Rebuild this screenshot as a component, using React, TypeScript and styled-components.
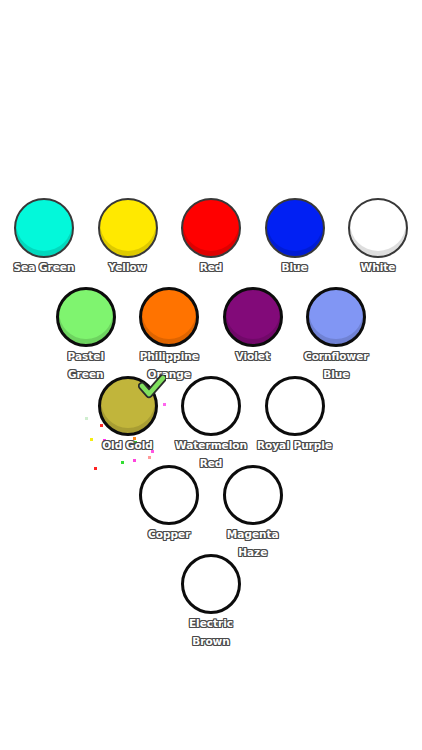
import React from 'react';
import styled, { createGlobalStyle } from 'styled-components';

const GlobalStyle = createGlobalStyle`
  html, body {
    margin: 0;
    padding: 0;
    background: #ffffff;
    font-family: "DejaVu Sans", "Liberation Sans", sans-serif;
  }
`;

const Page = styled.div`
  width: 422px;
  height: 750px;
  padding-top: 198px;
  box-sizing: border-box;
  overflow: hidden;
  background: #fff;
`;

const Pyramid = styled.div`
  display: flex;
  flex-direction: column;
  align-items: center;
`;

const Row = styled.div`
  display: flex;
  justify-content: center;
  height: 89px;
`;

const Cell = styled.div`
  position: relative;
  width: 83.5px;
  display: flex;
  flex-direction: column;
  align-items: center;
`;

const Swatch = styled.div<{ $color?: string; $thin?: boolean }>`
  width: 60px;
  height: 60px;
  border-radius: 50%;
  box-sizing: border-box;
  background: ${p => p.$color || '#fff'};
  border: ${p => (p.$thin ? '2px solid #383838' : '3px solid #0c0c0c')};
  box-shadow: ${p => (p.$color ? 'inset 0 -5px 0 rgba(0,0,0,0.13)' : 'none')};
  flex-shrink: 0;
`;

const Label = styled.div`
  margin-top: 0;
  width: 100px;
  text-align: center;
  font-size: 10.5px;
  font-weight: bold;
  line-height: 18px;
  color: #fff;
  white-space: nowrap;
  text-shadow:
    1px 0 0 #4a4a4a, -1px 0 0 #4a4a4a, 0 1px 0 #4a4a4a, 0 -1px 0 #4a4a4a,
    1px 1px 0 #4a4a4a, -1px -1px 0 #4a4a4a, 1px -1px 0 #4a4a4a, -1px 1px 0 #4a4a4a;
  position: relative;
  z-index: 2;
`;

const Check = styled.svg`
  position: absolute;
  left: 52px;
  top: -1px;
  width: 28px;
  height: 24px;
  z-index: 3;
`;

const Bit = styled.span<{ $c: string }>`
  position: absolute;
  width: 3px;
  height: 3px;
  background: ${p => p.$c};
  z-index: 1;
`;

type Color = { name: string[]; color?: string };

const rows: Color[][] = [
  [
    { name: ['Sea Green'], color: '#03f8da' },
    { name: ['Yellow'], color: '#ffe900' },
    { name: ['Red'], color: '#ff0000' },
    { name: ['Blue'], color: '#0120f3' },
    { name: ['White'], color: '#ffffff' },
  ],
  [
    { name: ['Pastel', 'Green'], color: '#7ff46f' },
    { name: ['Philippine', 'Orange'], color: '#ff7300' },
    { name: ['Violet'], color: '#820a79' },
    { name: ['Cornflower', 'Blue'], color: '#8196f4' },
  ],
  [
    { name: ['Old Gold'], color: '#c1b53b' },
    { name: ['Watermelon', 'Red'] },
    { name: ['Royal Purple'] },
  ],
  [{ name: ['Copper'] }, { name: ['Magenta', 'Haze'] }],
  [{ name: ['Electric', 'Brown'] }],
];

// confetti around the selected swatch, offsets from the cell's corner
const confetti = [
  { x: 14, y: 48, c: '#ff2a2a' },
  { x: 4, y: 62, c: '#f5ee10' },
  { x: 17, y: 63, c: '#ff33ee' },
  { x: 47, y: 61, c: '#ff8a1a' },
  { x: 48, y: 65, c: '#2ad02a' },
  { x: 65, y: 74, c: '#ff55e0' },
  { x: 47, y: 83, c: '#ff44dd' },
  { x: 35, y: 85, c: '#33dd33' },
  { x: 8, y: 91, c: '#ff2222' },
  { x: 77, y: 27, c: '#ff66ee' },
  { x: -1, y: 41, c: '#cfeecf' },
  { x: 62, y: 80, c: '#ff9999' },
];

const App: React.FC = () => {
  return (
    <>
      <GlobalStyle />
      <Page>
        <Pyramid>
          {rows.map((row, ri) => (
            <Row key={ri}>
              {row.map(item => (
                <Cell key={item.name.join(' ')}>
                  <Swatch $color={item.color} $thin={ri === 0} />
                  <Label>
                    {item.name.map(line => (
                      <div key={line}>{line}</div>
                    ))}
                  </Label>
                  {item.name[0] === 'Old Gold' && (
                    <>
                      <Check viewBox="0 0 28 24">
                        <polyline points="4,11 11,19 25,3" fill="none" stroke="#2a2a2a" strokeWidth="8" strokeLinecap="round" strokeLinejoin="round" />
                        <polyline points="4,11 11,19 25,3" fill="none" stroke="#80e05e" strokeWidth="4.5" strokeLinecap="round" strokeLinejoin="round" />
                      </Check>
                      {confetti.map((b, i) => (
                        <Bit key={i} $c={b.c} style={{ left: b.x, top: b.y }} />
                      ))}
                    </>
                  )}
                </Cell>
              ))}
            </Row>
          ))}
        </Pyramid>
      </Page>
    </>
  );
};

export default App;
